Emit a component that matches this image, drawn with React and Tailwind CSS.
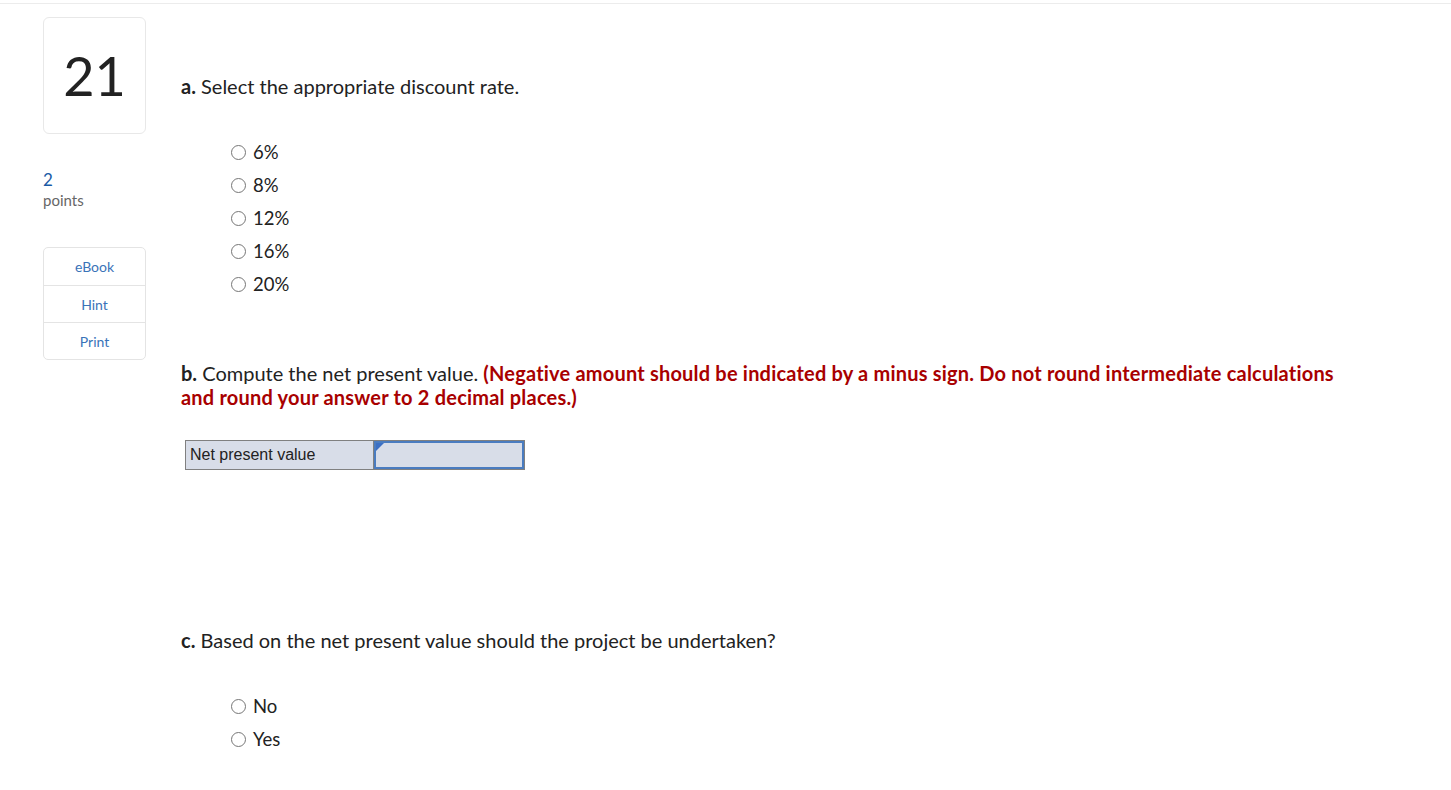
import React from 'react';

const font = { fontFamily: 'Lato, "Open Sans", sans-serif' };

function Radio({ label }) {
  return (
    <label className="flex items-center h-[33px] text-[18.5px] text-[#222] cursor-pointer">
      <span className="w-[15px] h-[15px] rounded-full border border-[#767676] bg-white mr-[7px]" />
      {label}
    </label>
  );
}

function SideBar() {
  return (
    <div className="w-[103px] shrink-0 flex flex-col">
      <div className="h-[117px] rounded-[6px] border border-[#e8e8e8] flex items-center justify-center text-[54px] text-[#222] leading-none">
        21
      </div>
      <div className="mt-[36px] text-[17px] text-[#1a5aa6] leading-[20px]">2</div>
      <div className="text-[15px] text-[#666] leading-[20px]">points</div>
      <div className="mt-[37px] rounded-[5px] border border-[#e4e4e4] flex flex-col text-[14px] text-[#3a73b8]">
        <button className="h-[38px] border-b border-[#e4e4e4]">eBook</button>
        <button className="h-[37px] border-b border-[#e4e4e4]">Hint</button>
        <button className="h-[36px]">Print</button>
      </div>
    </div>
  );
}

export default function App() {
  return (
    <div className="min-h-screen bg-white" style={font}>
      <div className="h-[4px] border-b border-[#ececec]" />
      <div className="flex pl-[43px] pt-[13px]">
        <SideBar />
        <div className="ml-[35px] w-[1162px] text-[20px] text-[#222]">
          <p className="mt-[57px] leading-[24px]">
            <b>a.</b> Select the appropriate discount rate.
          </p>
          <div className="mt-[38px] ml-[50px]">
            {['6%', '8%', '12%', '16%', '20%'].map((o) => (
              <Radio key={o} label={o} />
            ))}
          </div>
          <p className="mt-[60px] leading-[24px]">
            <b>b.</b> Compute the net present value.{' '}
            <b className="text-[#a80000] tracking-[0.2px]">
              (Negative amount should be indicated by a minus sign. Do not round intermediate calculations and round your answer to 2 decimal places.)
            </b>
          </p>
          <div className="mt-[31px] ml-[4px] flex w-[340px] h-[30px] border border-[#808080] bg-[#d8dde8]">
            <div
              className="w-[188px] border-r border-[#808080] flex items-center pl-[4px] text-[16px] text-[#222]"
              style={{ fontFamily: '"Liberation Sans", Arial, sans-serif' }}
            >
              Net present value
            </div>
            <div className="relative flex-1 border-2 border-[#4a7cc0] bg-[#d8dde8]">
              <span className="absolute left-0 top-0 w-0 h-0 border-t-[8px] border-t-[#3b6fc4] border-r-[8px] border-r-transparent" />
            </div>
          </div>
          <p className="mt-[158px] leading-[24px]">
            <b>c.</b> Based on the net present value should the project be undertaken?
          </p>
          <div className="mt-[38px] ml-[50px]">
            {['No', 'Yes'].map((o) => (
              <Radio key={o} label={o} />
            ))}
          </div>
        </div>
      </div>
    </div>
  );
}
